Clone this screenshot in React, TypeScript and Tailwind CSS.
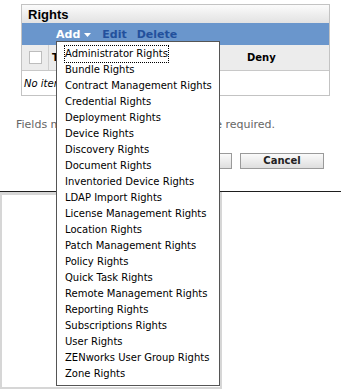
import React from "react";

const items = [
  "Administrator Rights",
  "Bundle Rights",
  "Contract Management Rights",
  "Credential Rights",
  "Deployment Rights",
  "Device Rights",
  "Discovery Rights",
  "Document Rights",
  "Inventoried Device Rights",
  "LDAP Import Rights",
  "License Management Rights",
  "Location Rights",
  "Patch Management Rights",
  "Policy Rights",
  "Quick Task Rights",
  "Remote Management Rights",
  "Reporting Rights",
  "Subscriptions Rights",
  "User Rights",
  "ZENworks User Group Rights",
  "Zone Rights",
];

export default function App() {
  return (
    <div
      className="relative w-[345px] h-[389px] overflow-hidden bg-white"
      style={{ fontFamily: '"DejaVu Sans", Verdana, sans-serif' }}
    >
      <div className="pt-[4px]">
        {/* Rights panel */}
        <div className="ml-[21px] w-[309px] border border-[#c3c3c3]">
          <div className="h-[18px] bg-gradient-to-b from-[#fbfbfb] to-[#e2e2e2] flex items-center pl-[6px]">
            <span
              className="text-[13px] font-bold text-black leading-none"
              style={{ fontFamily: '"Liberation Sans", Arial, sans-serif' }}
            >
              Rights
            </span>
          </div>
          <div className="h-[22px] bg-[#6a96cc] flex items-center pl-[34px] text-[11px] font-bold leading-none">
            <span className="text-white">Add</span>
            <svg width="7" height="4" viewBox="0 0 7 4" className="ml-[4px] mt-[1px]">
              <polygon points="0,0 7,0 3.5,4" fill="#ffffff" />
            </svg>
            <span className="ml-[11px] text-[#23509c]">Edit</span>
            <span className="ml-[10px] text-[#23509c]">Delete</span>
          </div>
          <div className="h-[26px] bg-[#ececec] border-b border-[#c8c8c8] flex items-stretch">
            <div className="w-[27px] border-r border-[#cfcfcf] flex items-center pl-[7px]">
              <div className="w-[13px] h-[13px] bg-white border border-[#bdbdbd]" />
            </div>
            <div className="flex-1 flex items-center pl-[3px] text-[10px] font-bold text-black">
              Type
            </div>
            <div className="w-[82px] flex items-center text-[10px] font-bold text-black">
              Deny
            </div>
          </div>
          <div className="h-[24px] flex items-center pl-[2px] text-[10px] italic text-black">
            No items available.
          </div>
        </div>

        <div className="mt-[20px] h-[16px] pl-[16px] flex items-center text-[11px] text-[#666666] whitespace-nowrap leading-none">
          Fields marked with an asterisk (*) are required.
        </div>

        <div className="mt-[21px] flex justify-end gap-[8px] pr-[21px]">
          <button className="w-[84px] h-[16px] border border-[#9a9a9a] bg-gradient-to-b from-[#fafafa] to-[#dedede] text-[10px] font-bold text-[#222] leading-none flex items-center justify-center">
            OK
          </button>
          <button className="w-[84px] h-[16px] border border-[#9a9a9a] bg-gradient-to-b from-[#fafafa] to-[#dedede] text-[10px] font-bold text-[#222] leading-none flex items-center justify-center">
            Cancel
          </button>
        </div>

        <div className="mt-[22px] h-px w-[341px] bg-[#1e1e1e]" />
        <div className="w-[222px] h-[198px] bg-[#d6d6d6] pt-[3px] pl-[2px] pr-[2px] pb-[3px] flex">
          <div className="flex-1 bg-white" />
        </div>
      </div>

      {/* Dropdown menu */}
      <div className="absolute left-[56px] top-[41px] w-[164px] border border-[#555555] bg-white pt-[4px] pb-[3px] pl-[8px]">
        {items.map((it, i) => (
          <div key={it} className="h-[16px] flex items-center">
            <span
              className={
                "text-[10px] text-black leading-[16px] whitespace-nowrap " +
                (i === 0 ? "outline outline-1 outline-dotted outline-black" : "")
              }
            >
              {it}
            </span>
          </div>
        ))}
      </div>
    </div>
  );
}
